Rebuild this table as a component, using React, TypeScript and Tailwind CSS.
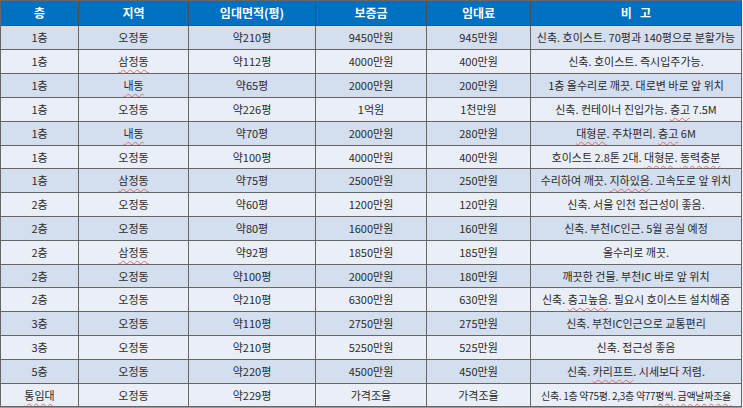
const header = ['층', '지역', '임대면적(평)', '보증금', '임대료', '비   고'];

// [..] marks words with the red spell-check squiggle
const rows = [
  ['1층', '오정동', '약210평', '9450만원', '945만원', '신축. 호이스트. 70평과 140평으로 분할가능'],
  ['1층', '[삼정동]', '약112평', '4000만원', '400만원', '신축. 호이스트. 즉시입주가능.'],
  ['1층', '[내동]', '약65평', '2000만원', '200만원', '1층 올수리로 깨끗. 대로변 바로 앞 위치'],
  ['1층', '오정동', '약226평', '1억원', '1천만원', '신축. 컨테이너 진입가능. [층고] 7.5M'],
  ['1층', '[내동]', '약70평', '2000만원', '280만원', '[대형문]. 주차편리. [층고] 6M'],
  ['1층', '오정동', '약100평', '4000만원', '400만원', '호이스트 2.8톤 2대. [대형문]. [동력충분]'],
  ['1층', '[삼정동]', '약75평', '2500만원', '250만원', '수리하여 깨끗. [지하있음]. 고속도로 앞 위치'],
  ['2층', '오정동', '약60평', '1200만원', '120만원', '신축. 서울 인천 접근성이 좋음.'],
  ['2층', '오정동', '약80평', '1600만원', '160만원', '신축. 부천IC인근. 5월 공실 예정'],
  ['2층', '[삼정동]', '약92평', '1850만원', '185만원', '올수리로 깨끗.'],
  ['2층', '오정동', '약100평', '2000만원', '180만원', '깨끗한 건물. 부천IC 바로 앞 위치'],
  ['2층', '오정동', '약210평', '6300만원', '630만원', '신축. [층고높음]. 필요시 호이스트 설치해줌'],
  ['3층', '오정동', '약110평', '2750만원', '275만원', '신축. 부천IC인근으로 교통편리'],
  ['3층', '오정동', '약210평', '5250만원', '525만원', '신축. 접근성 좋음'],
  ['5층', '오정동', '약220평', '4500만원', '450만원', '신축. [카리프트]. 시세보다 저렴.'],
  ['[통임대]', '오정동', '약229평', '가격조율', '가격조율', '신축. 1층 약75평. 2,3층 약77[평씩]. [금액날짜조율]'],
];

const heights = ['h-[24px]', 'h-[24px]', 'h-[24px]', 'h-[24px]', 'h-[24px]', 'h-[23px]', 'h-[24px]', 'h-[24px]', 'h-[24px]', 'h-[24px]', 'h-[23px]', 'h-[24px]', 'h-[24px]', 'h-[24px]', 'h-[24px]', 'h-[23px]'];

const Text = ({ value }: { value: string }) => (
  <span>
    {value.split(/(\[[^\]]+\])/).map((part, i) =>
      part.startsWith('[') ? (
        <span key={i} className="underline decoration-wavy decoration-[#e36a6a] decoration-1 underline-offset-[3px]">
          {part.slice(1, -1)}
        </span>
      ) : (
        part
      )
    )}
  </span>
);

const App = () => {
  return (
    <div className="w-[743px] h-[408px] bg-white overflow-hidden" style={{ fontFamily: '"Noto Sans CJK KR", "Noto Sans", sans-serif' }}>
      <div className="w-[742px] border-l border-t border-[#666] grid grid-cols-[78px_110px_127px_111px_104px_211px] shadow-[0_1px_1px_#9a9a9a]">
        {header.map((h) => (
          <div
            key={h}
            className="h-[25px] bg-[#0070c0] border-r border-b border-[#4f4f4f] flex items-center justify-center text-white text-[12px] font-bold whitespace-pre"
          >
            {h}
          </div>
        ))}
        {rows.map((row, r) =>
          row.map((cell, c) => (
            <div
              key={`${r}-${c}`}
              className={`${heights[r]} ${r % 2 === 0 ? 'bg-[#d3deef]' : 'bg-[#eaeff7]'} ${r === 15 && c === 5 ? 'text-[10px] tracking-[-0.3px]' : 'text-[11px]'} border-r border-b border-[#666] flex items-center justify-center text-[#2a2a2a] whitespace-nowrap overflow-hidden`}
            >
              <Text value={cell} />
            </div>
          ))
        )}
      </div>
    </div>
  );
};

export default App;
